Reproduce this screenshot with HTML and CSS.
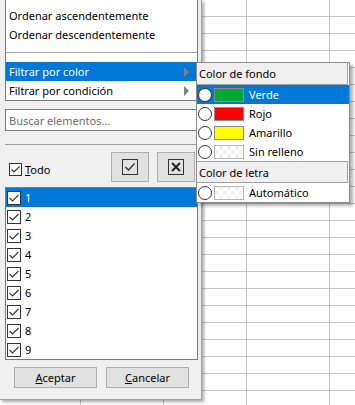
FILE: index.html
```html
<!DOCTYPE html>
<html lang="es">
<head>
<meta charset="utf-8">
<link rel="stylesheet" href="styles.css">
</head>
<body>
<div class="popup">
  <div class="menu">
    <div class="mi">Ordenar ascendentemente</div>
    <div class="mi">Ordenar descendentemente</div>
    <div class="msep"></div>
    <div class="mi active">Filtrar por color<span class="arr"></span></div>
    <div class="mi">Filtrar por condición<span class="arr"></span></div>
  </div>
  <div class="search">Buscar elementos...</div>
  <div class="hsep"></div>
  <div class="allrow">
    <div class="todo"><span class="cb"><svg width="11" height="11" viewBox="0 0 11 11"><polyline points="1.5,5.5 4,8 9.5,2.5" fill="none" stroke="#333" stroke-width="1.1"/></svg></span><span><u>T</u>odo</span></div>
    <button class="ibtn"><svg width="16" height="16" viewBox="0 0 16 16"><rect x="0.5" y="0.5" width="15" height="15" fill="none" stroke="#333"/><polyline points="3.5,8 6.5,11 12.5,4.5" fill="none" stroke="#333" stroke-width="1.3"/></svg></button>
    <button class="ibtn"><svg width="16" height="16" viewBox="0 0 16 16"><rect x="0.5" y="0.5" width="15" height="15" fill="none" stroke="#333"/><path d="M4 4 L12 12 M12 4 L4 12" fill="none" stroke="#222" stroke-width="2"/></svg></button>
  </div>
  <div class="list">
    <div class="li sel"><span class="cb"><svg width="12" height="12" viewBox="0 0 12 12"><polyline points="1.5,6 4.5,9 10.5,3" fill="none" stroke="#333" stroke-width="1.1"/></svg></span>1</div>
    <div class="li"><span class="cb"><svg width="12" height="12" viewBox="0 0 12 12"><polyline points="1.5,6 4.5,9 10.5,3" fill="none" stroke="#333" stroke-width="1.1"/></svg></span>2</div>
    <div class="li"><span class="cb"><svg width="12" height="12" viewBox="0 0 12 12"><polyline points="1.5,6 4.5,9 10.5,3" fill="none" stroke="#333" stroke-width="1.1"/></svg></span>3</div>
    <div class="li"><span class="cb"><svg width="12" height="12" viewBox="0 0 12 12"><polyline points="1.5,6 4.5,9 10.5,3" fill="none" stroke="#333" stroke-width="1.1"/></svg></span>4</div>
    <div class="li"><span class="cb"><svg width="12" height="12" viewBox="0 0 12 12"><polyline points="1.5,6 4.5,9 10.5,3" fill="none" stroke="#333" stroke-width="1.1"/></svg></span>5</div>
    <div class="li"><span class="cb"><svg width="12" height="12" viewBox="0 0 12 12"><polyline points="1.5,6 4.5,9 10.5,3" fill="none" stroke="#333" stroke-width="1.1"/></svg></span>6</div>
    <div class="li"><span class="cb"><svg width="12" height="12" viewBox="0 0 12 12"><polyline points="1.5,6 4.5,9 10.5,3" fill="none" stroke="#333" stroke-width="1.1"/></svg></span>7</div>
    <div class="li"><span class="cb"><svg width="12" height="12" viewBox="0 0 12 12"><polyline points="1.5,6 4.5,9 10.5,3" fill="none" stroke="#333" stroke-width="1.1"/></svg></span>8</div>
    <div class="li"><span class="cb"><svg width="12" height="12" viewBox="0 0 12 12"><polyline points="1.5,6 4.5,9 10.5,3" fill="none" stroke="#333" stroke-width="1.1"/></svg></span>9</div>
  </div>
  <div class="actions">
    <button class="btn"><u>A</u>ceptar</button>
    <button class="btn"><u>C</u>ancelar</button>
  </div>
</div>
<div class="submenu">
  <div class="shead">Color de fondo</div>
  <div class="srow focus"><span class="radio"></span><span class="sw green"></span>Verde</div>
  <div class="srow"><span class="radio"></span><span class="sw red"></span>Rojo</div>
  <div class="srow"><span class="radio"></span><span class="sw yellow"></span>Amarillo</div>
  <div class="srow"><span class="radio"></span><span class="sw none"></span>Sin relleno</div>
  <div class="shead second">Color de letra</div>
  <div class="srow"><span class="radio"></span><span class="sw none"></span>Automático</div>
</div>
</body>
</html>
```
FILE: styles.css
```css
html, body {
  margin: 0;
  padding: 0;
}
body {
  width: 355px;
  height: 405px;
  overflow: hidden;
  position: relative;
  font-family: "Noto Sans", "Open Sans", sans-serif;
  font-size: 11px;
  color: #000;
  background-color: #fff;
  background-image:
    linear-gradient(to right, #c6c6c6 1px, transparent 1px),
    linear-gradient(to bottom, #c6c6c6 1px, transparent 1px);
  background-size: 83px 100%, 100% 17px;
  background-position: 80px 0, 0 16px;
}
.popup {
  position: absolute;
  left: 0;
  top: 0;
  width: 193px;
  height: 399px;
  padding: 0 3px 0 5px;
  background: #f0f0f0;
  border-right: 1px solid #a0a0a0;
  border-bottom: 1px solid #a0a0a0;
  box-shadow: 2px 2px 3px rgba(0, 0, 0, 0.35);
  display: flex;
  flex-direction: column;
}
.menu {
  background: #fff;
  border: 1px solid #7a7a7a;
  border-top: none;
  padding-top: 6px;
  display: flex;
  flex-direction: column;
}
.mi {
  height: 19px;
  padding-left: 3px;
  display: flex;
  align-items: center;
  white-space: nowrap;
}
.mi.active {
  background: #0078d7;
  color: #fff;
}
.arr {
  margin-left: auto;
  margin-right: 8px;
  width: 0;
  height: 0;
  border-left: 5px solid #808080;
  border-top: 5px solid transparent;
  border-bottom: 5px solid transparent;
}
.msep {
  height: 8px;
  border-bottom: 1px solid #a0a0a0;
  margin-bottom: 9px;
}
.search {
  margin-top: 8px;
  height: 20px;
  display: flex;
  align-items: center;
  border: 1px solid #7a7a7a;
  background: #fff;
  padding-left: 3px;
  color: #6d6d6d;
}
.hsep {
  margin-top: 13px;
  height: 0;
  border-top: 1px solid #a0a0a0;
}
.allrow {
  margin-top: 7px;
  height: 30px;
  display: flex;
  align-items: center;
  gap: 8px;
  padding-right: 3px;
}
.todo {
  display: flex;
  align-items: center;
  gap: 3px;
  margin-left: 4px;
  margin-top: 5px;
  margin-right: auto;
}
.cb {
  width: 11px;
  height: 11px;
  border: 1px solid #333;
  background: #fff;
  display: inline-flex;
  flex: none;
}
.ibtn {
  width: 38px;
  height: 30px;
  padding: 0;
  background: #e1e1e1;
  border: 1px solid #adadad;
  display: flex;
  align-items: center;
  justify-content: center;
}
.list {
  margin-top: 5px;
  border: 1px solid #7a7a7a;
  background: #fff;
  display: flex;
  flex-direction: column;
}
.li {
  height: 19px;
  display: flex;
  align-items: center;
  gap: 4px;
  padding-left: 1px;
}
.li .cb {
  width: 12px;
  height: 12px;
}
.li.sel {
  background: #0078d7;
  color: #fff;
}
.actions {
  margin-top: 7px;
  display: flex;
  gap: 9px;
  padding-left: 9px;
}
.btn {
  width: 83px;
  height: 21px;
  padding: 0;
  background: #e1e1e1;
  border: 1px solid #adadad;
  font-family: inherit;
  font-size: 11px;
  color: #000;
}
.submenu {
  position: absolute;
  left: 196px;
  top: 62px;
  width: 152px;
  background: #fff;
  border: 1px solid #8c8c8c;
  box-shadow: 3px 3px 3px rgba(0, 0, 0, 0.3);
  display: flex;
  flex-direction: column;
}
.shead {
  height: 21px;
  display: flex;
  align-items: center;
  padding-left: 2px;
  background: #f0f0f0;
  border-bottom: 1px solid #a0a0a0;
  border-right: 1px solid #a0a0a0;
  margin-right: 1px;
}
.shead.second {
  height: 20px;
  border-top: 1px solid #a0a0a0;
}
.srow {
  height: 19px;
  display: flex;
  align-items: center;
  padding-left: 1px;
  box-sizing: border-box;
}
.srow.focus {
  background: #0078d7;
  color: #fff;
  border: 1px dotted #6b5a3a;
  padding-left: 0;
}
.radio {
  width: 12px;
  height: 12px;
  border: 1px solid #333;
  border-radius: 50%;
  background: #fff;
  flex: none;
}
.sw {
  width: 28px;
  height: 12px;
  border: 1px solid #8c8c8c;
  margin-left: 2px;
  margin-right: 5px;
  flex: none;
}
.sw.green { background: #00a933; }
.sw.red { background: #ff0000; }
.sw.yellow { background: #ffff00; }
.sw.none {
  border-color: #b4b4b4;
  background-color: #fff;
  background-image:
    linear-gradient(45deg, #f2f2f2 25%, transparent 25%, transparent 75%, #f2f2f2 75%),
    linear-gradient(45deg, #f2f2f2 25%, transparent 25%, transparent 75%, #f2f2f2 75%);
  background-size: 8px 8px;
  background-position: 0 0, 4px 4px;
}
```
